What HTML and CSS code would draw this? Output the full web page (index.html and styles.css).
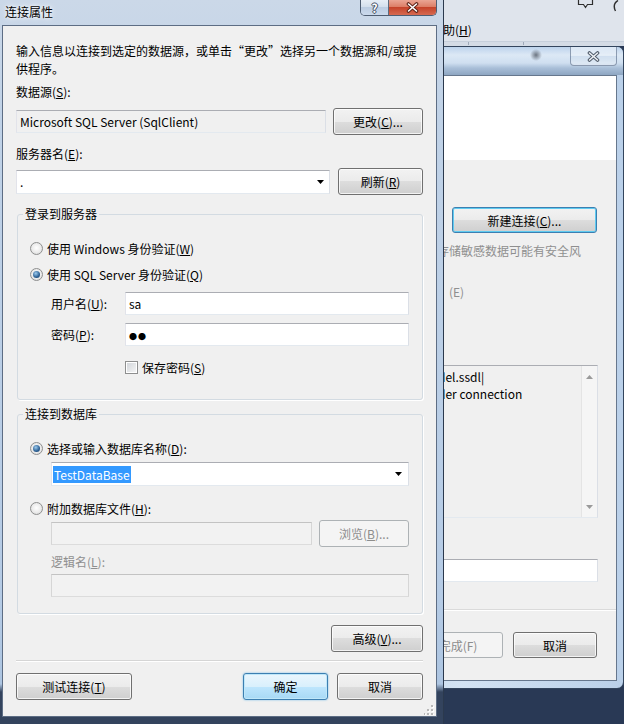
FILE: index.html
```html
<!DOCTYPE html>
<html lang="zh-CN">
<head>
    <meta charset="UTF-8">
    <meta name="viewport" content="width=device-width, initial-scale=1.0">
    <title>连接属性</title>
    <link rel="stylesheet" href="styles.css">
</head>
<body>
<div class="desktop">
    <div class="app-menu">
        <div class="app-icons">
            <svg class="ico-bubble" width="17" height="9" viewBox="0 0 17 9">
                <path d="M1.5 -2V4.5H6.5L8.5 7.5L10.5 4.5H15.5V-2" fill="none" stroke="#2e2e2e" stroke-width="1.2"/>
            </svg>
            <svg class="ico-help" width="10" height="16" viewBox="0 0 10 16">
                <path d="M7 0.5C3 3 2.5 7 4.5 11" fill="none" stroke="#2e2e2e" stroke-width="1.4"/>
            </svg>
        </div>
        <div class="menu-row"><span class="menu-item">帮助(<u>H</u>)</span></div>
    </div>
    <div class="app-toolbar"><span class="tb-sep s1"></span><span class="tb-sep s2"></span></div>

    <!-- 后面的向导窗口 -->
    <div class="win back-win">
        <div class="bw-title">
            <span class="cap-close inactive">
                <svg width="13" height="11" viewBox="0 0 13 11">
                    <path d="M2.5 2L10.5 9M10.5 2L2.5 9" stroke="#4f5a69" stroke-width="3.6" stroke-linecap="round"/>
                    <path d="M2.5 2L10.5 9M10.5 2L2.5 9" stroke="#eef1f5" stroke-width="1.6" stroke-linecap="round"/>
                </svg>
            </span>
        </div>
        <div class="bw-client">
            <div class="bw-white"></div>
            <div class="bw-body">
                <button class="btn btn-focus bw-new">新建连接(<u>C</u>)...</button>
                <div class="bw-warn">在连接字符串中存储敏感数据可能有安全风</div>
                <div class="bw-ekey">(E)</div>
                <div class="bw-text">
                    <div class="bw-lines">
                        <div>del.ssdl|</div>
                        <div>der connection</div>
                    </div>
                    <div class="vscroll">
                        <svg width="7" height="4" viewBox="0 0 7 4"><path d="M0 4H7L3.5 0Z" fill="#9a9a9a"/></svg>
                        <svg width="7" height="4" viewBox="0 0 7 4"><path d="M0 0H7L3.5 4Z" fill="#9a9a9a"/></svg>
                    </div>
                </div>
                <div class="tb bw-input"></div>
                <div class="bw-sep"></div>
                <div class="bw-buttons">
                    <button class="btn btn-finish" disabled>完成(F)</button>
                    <button class="btn btn-cancel2">取消</button>
                </div>
            </div>
        </div>
    </div>

    <!-- 连接属性对话框 -->
    <div class="win front-win">
        <div class="fw-title">
            <span class="fw-caption">连接属性</span>
            <div class="cap-btns">
                <span class="cap-help">?</span>
                <span class="cap-close">
                    <svg width="13" height="11" viewBox="0 0 13 11">
                        <path d="M2.5 2L10.5 9M10.5 2L2.5 9" stroke="#5b2217" stroke-width="3.6" stroke-linecap="round"/>
                        <path d="M2.5 2L10.5 9M10.5 2L2.5 9" stroke="#fff" stroke-width="1.6" stroke-linecap="round"/>
                    </svg>
                </span>
            </div>
        </div>
        <div class="fw-client">
            <p class="intro">输入信息以连接到选定的数据源，或单击“更改”选择另一个数据源和/或提供程序。</p>

            <div class="lbl lbl-ds">数据源(<u>S</u>):</div>
            <div class="row row-ds">
                <div class="tb tb-readonly">Microsoft SQL Server (SqlClient)</div>
                <button class="btn btn-change">更改(<u>C</u>)...</button>
            </div>

            <div class="lbl lbl-server">服务器名(<u>E</u>):</div>
            <div class="row row-server">
                <div class="tb combo combo-server">
                    <span>.</span>
                    <svg class="arrow" width="7" height="4" viewBox="0 0 7 4"><path d="M0 0H7L3.5 4Z"/></svg>
                </div>
                <button class="btn btn-refresh">刷新(<u>R</u>)</button>
            </div>

            <fieldset class="group group-login">
                <legend>登录到服务器</legend>
                <div class="gbody login-body">
                    <div class="opt opt-first"><span class="radio"></span><span>使用 Windows 身份验证(<u>W</u>)</span></div>
                    <div class="opt"><span class="radio on"></span><span>使用 SQL Server 身份验证(<u>Q</u>)</span></div>
                    <div class="field field-user">
                        <span class="field-label">用户名(<u>U</u>):</span>
                        <div class="tb field-input">sa</div>
                    </div>
                    <div class="field field-pwd">
                        <span class="field-label">密码(<u>P</u>):</span>
                        <div class="tb field-input"><span class="dots">●●</span></div>
                    </div>
                    <div class="opt opt-check"><span class="check"></span><span>保存密码(<u>S</u>)</span></div>
                </div>
            </fieldset>

            <fieldset class="group group-db">
                <legend>连接到数据库</legend>
                <div class="gbody db-body">
                    <div class="opt opt-first"><span class="radio on"></span><span>选择或输入数据库名称(<u>D</u>):</span></div>
                    <div class="tb combo combo-db">
                        <span class="sel">TestDataBase</span>
                        <svg class="arrow" width="7" height="4" viewBox="0 0 7 4"><path d="M0 0H7L3.5 4Z"/></svg>
                    </div>
                    <div class="opt opt-attach"><span class="radio"></span><span>附加数据库文件(<u>H</u>):</span></div>
                    <div class="row row-attach">
                        <div class="tb tb-disabled attach-input"></div>
                        <button class="btn btn-browse" disabled>浏览(<u>B</u>)...</button>
                    </div>
                    <div class="lbl lbl-logical">逻辑名(<u>L</u>):</div>
                    <div class="tb tb-disabled logical-input"></div>
                </div>
            </fieldset>

            <div class="row row-advanced">
                <button class="btn btn-advanced">高级(<u>V</u>)...</button>
            </div>

            <div class="sep"></div>

            <div class="row row-bottom">
                <button class="btn btn-test">测试连接(<u>T</u>)</button>
                <button class="btn btn-default btn-ok">确定</button>
                <button class="btn btn-cancel">取消</button>
            </div>

            <svg class="grip" width="10" height="10" viewBox="0 0 10 10">
                <g fill="#fff">
                    <rect x="8" y="1" width="2" height="2"/><rect x="8" y="5" width="2" height="2"/><rect x="4" y="5" width="2" height="2"/>
                    <rect x="8" y="9" width="2" height="1"/><rect x="4" y="9" width="2" height="1"/><rect x="0" y="9" width="2" height="1"/>
                </g>
                <g fill="#b8b8b8">
                    <rect x="7" y="0" width="2" height="2"/><rect x="7" y="4" width="2" height="2"/><rect x="3" y="4" width="2" height="2"/>
                    <rect x="7" y="8" width="2" height="2"/><rect x="3" y="8" width="2" height="2"/><rect x="-1" y="8" width="2" height="2"/>
                </g>
            </svg>
        </div>
    </div>
</div>
</body>
</html>
```

FILE: styles.css
```css
* {
    box-sizing: border-box;
}

body {
    margin: 0;
    font-family: "Noto Sans CJK SC", "Noto Sans", sans-serif;
    font-size: 12px;
    color: #000;
}

u {
    text-decoration: underline;
    text-underline-offset: 1px;
}

.desktop {
    position: relative;
    width: 624px;
    height: 724px;
    overflow: hidden;
    background: #293955;
}

/* 背景里的 VS 菜单栏 */
.app-menu {
    height: 41px;
    background: #dfe4ec;
}

.app-icons {
    display: flex;
    height: 21px;
    align-items: flex-start;
    padding-left: 577px;
    gap: 17px;
}

.menu-row {
    padding-left: 431px;
    line-height: 18px;
}

.app-toolbar {
    position: relative;
    height: 5px;
    background: #d4dbe5;
    border-top: 1px solid #c6cfdb;
}

.tb-sep {
    position: absolute;
    top: 0;
    width: 1px;
    height: 3px;
    background: #9ea9b8;
}

.tb-sep.s1 { left: 468px; }
.tb-sep.s2 { left: 523px; }

.win {
    position: absolute;
    display: flex;
    flex-direction: column;
}

/* 按钮 */
.btn {
    height: 27px;
    padding: 0;
    border: 1px solid #707070;
    border-radius: 3px;
    background: linear-gradient(#f2f2f2, #ebebeb 50%, #dddddd 50%, #cfcfcf);
    box-shadow: inset 0 0 0 1px rgba(255, 255, 255, 0.75);
    font: inherit;
    color: #000;
    flex: none;
}

.btn-default {
    border-color: #3c7fb1;
    background: linear-gradient(#eaf6fd, #d9f0fc 50%, #bee6fd 50%, #a7d9f5);
    box-shadow: inset 0 0 0 1px #bfe7f9, 0 0 2px #6cb8e6;
}

.btn-focus {
    border-color: #3c7fb1;
    box-shadow: inset 0 0 0 1px #5fcbf0;
}

.btn:disabled {
    border-color: #adb2b5;
    background: #f4f4f4;
    color: #8d8d8d;
    box-shadow: none;
}

/* 文本框 */
.tb {
    height: 23px;
    padding: 0 3px;
    border: 1px solid;
    border-color: #abadb3 #dbdfe6 #e3e9ef #e2e3ea;
    background: #fff;
    line-height: 21px;
    white-space: nowrap;
    overflow: hidden;
}

.tb-readonly {
    background: #f0f0f0;
}

.tb-disabled {
    background: #f2f2f2;
    border-color: #c3c3c3 #d6d6d6 #dcdcdc #d6d6d6;
}

.combo {
    display: flex;
    align-items: center;
}

.combo .arrow {
    margin-left: auto;
    margin-right: 1px;
}

/* 后面的窗口 */
.back-win {
    left: 300px;
    top: 46px;
    width: 324px;
    height: 643px;
    z-index: 1;
    border: 1px solid #33455d;
    border-radius: 0 7px 7px 0;
    background: linear-gradient(to right, #b8cfe9, #d3e3f3 50%, #bad0e9);
}

.bw-title {
    display: flex;
    justify-content: flex-end;
    height: 28px;
    padding-right: 6px;
    border-radius: 0 6px 0 0;
    background:
        radial-gradient(circle at 235px 8px, rgba(70, 78, 90, 0.75), rgba(70, 78, 90, 0) 6px),
        linear-gradient(#bdd3ec, #dce8f5 8px, #cfdff0 16px, #a9bfd8 21px, #8ea6c2 28px);
}

.cap-close {
    display: flex;
    align-items: center;
    justify-content: center;
    width: 47px;
}

.cap-close.inactive {
    height: 19px;
    border: 1px solid rgba(70, 90, 120, 0.55);
    border-top: 0;
    border-radius: 0 0 4px 4px;
    background: linear-gradient(rgba(255, 255, 255, 0.5), rgba(255, 255, 255, 0.25) 50%, rgba(190, 208, 230, 0.35) 50%, rgba(255, 255, 255, 0.4));
}

.bw-client {
    display: flex;
    flex-direction: column;
    height: 606px;
    margin-right: 6px;
    border: 1px solid #66778d;
    background: #f0f0f0;
}

.bw-white {
    height: 84px;
    background: #fff;
}

.bw-body {
    display: flex;
    flex-direction: column;
    padding-right: 19px;
}

.bw-new {
    width: 145px;
    height: 26px;
    margin: 47px 0 0 auto;
}

.bw-warn {
    margin-top: 9px;
    padding-right: 16px;
    line-height: 18px;
    text-align: right;
    white-space: nowrap;
    color: #8f8f8f;
}

.bw-ekey {
    margin-top: 23px;
    padding-left: 147px;
    line-height: 18px;
    color: #8f8f8f;
}

.bw-text {
    display: flex;
    height: 153px;
    margin: 64px -1px 0 128px;
    border: 1px solid;
    border-color: #abadb3 #dbdfe6 #e3e9ef #e2e3ea;
    background: #f0f0f0;
}

.bw-lines {
    flex: 1;
    padding: 2px 0 0 7px;
    line-height: 17px;
    white-space: nowrap;
    overflow: hidden;
}

.vscroll {
    display: flex;
    flex-direction: column;
    justify-content: space-between;
    align-items: center;
    width: 16px;
    padding: 9px 0 8px;
    border-left: 1px solid #e4e4e4;
    background: #f5f5f5;
}

.bw-input {
    margin: 41px -1px 0 128px;
}

.bw-sep {
    margin: 27px -19px 0 0;
    border-top: 1px solid #dadada;
    border-bottom: 1px solid #fff;
}

.bw-buttons {
    display: flex;
    justify-content: flex-end;
    gap: 10px;
    margin-top: 21px;
}

.bw-buttons .btn {
    height: 26px;
}

.btn-finish { width: 90px; }
.btn-cancel2 { width: 84px; }

/* 连接属性对话框 */
.front-win {
    left: 0;
    top: 0;
    width: 444px;
    height: 724px;
    z-index: 2;
    border-right: 1px solid #2b394d;
    background: linear-gradient(#cbd8e8, #c0d2e7 120px, #b5cbe5 600px, #adc5e1 684px, #33435d 692px);
}

.fw-title {
    display: flex;
    height: 25px;
}

.fw-caption {
    padding: 3px 0 0 5px;
    line-height: 18px;
    text-shadow: 0 0 6px #fff, 0 0 3px #fff;
}

.cap-btns {
    display: flex;
    height: 16px;
    margin-left: auto;
    margin-right: 6px;
    border: 1px solid #4e5d72;
    border-top: 0;
    border-radius: 0 0 5px 5px;
    overflow: hidden;
}

.cap-help {
    width: 28px;
    border-right: 1px solid #5d6b7e;
    background: linear-gradient(#e7eef6, #d2deec 50%, #bccde2 50%, #cbd9ec);
    text-align: center;
    font-weight: bold;
    line-height: 15px;
    color: #fff;
    text-shadow: -1px 0 #3e4c60, 1px 0 #3e4c60, 0 -1px #3e4c60, 0 1px #3e4c60;
}

.cap-btns .cap-close {
    background: linear-gradient(#eaa594, #db7a62 50%, #c5432a 50%, #d66a51);
}

.fw-client {
    position: relative;
    display: flex;
    flex-direction: column;
    height: 692px;
    margin: 0 6px 0 2px;
    padding: 16px 13px 0;
    border: 1px solid #5d6d84;
    background: #f0f0f0;
}

.intro {
    margin: 0;
    line-height: 18px;
}

.lbl {
    line-height: 18px;
}

.lbl-ds { margin-top: 5px; }
.lbl-server { margin-top: 10px; }

.row {
    display: flex;
    align-items: center;
    height: 27px;
}

.row-ds { margin-top: 7px; }
.row-server { margin-top: 5px; }

.tb-readonly { width: 310px; }

.combo-server {
    width: 314px;
    height: 24px;
    padding-right: 4px;
}

.btn-change { width: 90px; margin-left: auto; }
.btn-refresh { width: 85px; margin-left: auto; }

/* 分组框 */
.group {
    min-width: 0;
    margin: 10px 0 0 1px;
    padding: 0;
    border: 1px solid #d3dbe2;
    border-radius: 3px;
    box-shadow: 1px 1px 0 #fff;
}

.group legend {
    margin-left: 5px;
    padding: 0 2px;
    line-height: 18px;
}

.group-db { margin-top: 5px; }

.gbody {
    display: flex;
    flex-direction: column;
    padding: 0 13px 0 12px;
}

.login-body { padding-bottom: 23px; }
.db-body { padding-bottom: 16px; }

.opt {
    display: flex;
    align-items: center;
    gap: 4px;
    height: 18px;
    margin-top: 8px;
}

.opt-first { margin-top: 16px; }

.radio {
    position: relative;
    flex: none;
    width: 13px;
    height: 13px;
    border: 1px solid #8e8f8f;
    border-radius: 50%;
    background: radial-gradient(circle at 50% 45%, #fff, #ebebeb 55%, #d0d0d0);
}

.radio.on::after {
    content: "";
    position: absolute;
    left: 2px;
    top: 2px;
    width: 7px;
    height: 7px;
    border-radius: 50%;
    background: radial-gradient(circle at 40% 35%, #9ccbee, #2b5f93 60%, #18395f);
}

.check {
    flex: none;
    width: 13px;
    height: 13px;
    border: 1px solid #8e8f8f;
    background: linear-gradient(135deg, #cfd3d8, #f7f7f7);
    box-shadow: inset 0 0 0 1px #fff;
}

.field {
    display: flex;
    align-items: center;
    padding-left: 21px;
}

.field-user { margin-top: 9px; }
.field-pwd { margin-top: 8px; }

.field-label {
    width: 74px;
}

.field-input {
    flex: 1;
}

.dots {
    font-size: 8px;
    letter-spacing: 1px;
}

.opt-check {
    margin-top: 12px;
    padding-left: 95px;
}

.combo-db {
    height: 24px;
    margin: 5px 0 0 21px;
    padding: 0 5px 0 1px;
}

.sel {
    padding: 0 1px;
    line-height: 17px;
    background: #3399ff;
    color: #fff;
}

.opt-attach { margin-top: 13px; }

.row-attach {
    margin-top: 3px;
    padding-left: 21px;
}

.attach-input { width: 261px; }
.btn-browse { width: 90px; margin-left: auto; }

.lbl-logical {
    margin-top: 6px;
    padding-left: 21px;
    color: #8f8f8f;
}

.logical-input {
    margin: 3px 0 0 21px;
}

.row-advanced {
    justify-content: flex-end;
    margin-top: 11px;
}

.btn-advanced { width: 92px; }

.sep {
    margin-top: 8px;
    border-top: 1px solid #d5d5d5;
    border-bottom: 1px solid #fff;
}

.row-bottom {
    margin-top: 11px;
}

.btn-test { width: 116px; }
.btn-ok { width: 85px; margin-left: auto; }
.btn-cancel { width: 86px; margin-left: 9px; }

.grip {
    position: absolute;
    right: 2px;
    bottom: 1px;
}
```
